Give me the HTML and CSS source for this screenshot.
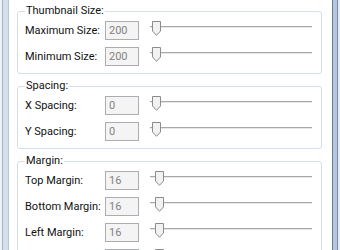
FILE: index.html
```html
<!DOCTYPE html>
<html lang="en">
<head>
    <meta charset="UTF-8">
    <title>Thumbnail Options</title>
    <link rel="stylesheet" href="styles.css">
</head>
<body>
    <div class="window">
        <div class="frame-left"></div>
        <div class="content">
            <fieldset class="group">
                <legend>Thumbnail Size:</legend>
                <div class="row">
                    <label>Maximum Size:</label>
                    <input class="num" value="200" readonly>
                    <div class="slider">
                        <span class="track"></span>
                        <svg class="thumb" style="left: 2px" width="9" height="15" viewBox="0 0 9 15"><path d="M0.5 0.5H8.5V10L4.5 14.3L0.5 10Z"/></svg>
                    </div>
                </div>
                <div class="row">
                    <label>Minimum Size:</label>
                    <input class="num" value="200" readonly>
                    <div class="slider">
                        <span class="track"></span>
                        <svg class="thumb" style="left: 2px" width="9" height="15" viewBox="0 0 9 15"><path d="M0.5 0.5H8.5V10L4.5 14.3L0.5 10Z"/></svg>
                    </div>
                </div>
            </fieldset>

            <fieldset class="group">
                <legend>Spacing:</legend>
                <div class="row">
                    <label>X Spacing:</label>
                    <input class="num" value="0" readonly>
                    <div class="slider">
                        <span class="track"></span>
                        <svg class="thumb" style="left: 2px" width="9" height="15" viewBox="0 0 9 15"><path d="M0.5 0.5H8.5V10L4.5 14.3L0.5 10Z"/></svg>
                    </div>
                </div>
                <div class="row">
                    <label>Y Spacing:</label>
                    <input class="num" value="0" readonly>
                    <div class="slider">
                        <span class="track"></span>
                        <svg class="thumb" style="left: 2px" width="9" height="15" viewBox="0 0 9 15"><path d="M0.5 0.5H8.5V10L4.5 14.3L0.5 10Z"/></svg>
                    </div>
                </div>
            </fieldset>

            <fieldset class="group">
                <legend>Margin:</legend>
                <div class="row">
                    <label>Top Margin:</label>
                    <input class="num" value="16" readonly>
                    <div class="slider">
                        <span class="track"></span>
                        <svg class="thumb" style="left: 5px" width="9" height="15" viewBox="0 0 9 15"><path d="M0.5 0.5H8.5V10L4.5 14.3L0.5 10Z"/></svg>
                    </div>
                </div>
                <div class="row">
                    <label>Bottom Margin:</label>
                    <input class="num" value="16" readonly>
                    <div class="slider">
                        <span class="track"></span>
                        <svg class="thumb" style="left: 5px" width="9" height="15" viewBox="0 0 9 15"><path d="M0.5 0.5H8.5V10L4.5 14.3L0.5 10Z"/></svg>
                    </div>
                </div>
                <div class="row">
                    <label>Left Margin:</label>
                    <input class="num" value="16" readonly>
                    <div class="slider">
                        <span class="track"></span>
                        <svg class="thumb" style="left: 5px" width="9" height="15" viewBox="0 0 9 15"><path d="M0.5 0.5H8.5V10L4.5 14.3L0.5 10Z"/></svg>
                    </div>
                </div>
                <div class="row">
                    <label>Right Margin:</label>
                    <input class="num" value="16" readonly>
                    <div class="slider">
                        <span class="track"></span>
                        <svg class="thumb" style="left: 5px" width="9" height="15" viewBox="0 0 9 15"><path d="M0.5 0.5H8.5V10L4.5 14.3L0.5 10Z"/></svg>
                    </div>
                </div>
            </fieldset>
        </div>
        <div class="frame-right"></div>
    </div>
</body>
</html>
```

FILE: styles.css
```css
* {
    margin: 0;
    padding: 0;
    box-sizing: border-box;
}

html, body {
    width: 340px;
    height: 250px;
    overflow: hidden;
    background-color: #fff;
}

body {
    font-family: Roboto, "Noto Sans", sans-serif;
    font-size: 11px;
    color: #111;
}

.window {
    display: flex;
    height: 250px;
}

/* window chrome on both sides */
.frame-left {
    width: 9px;
    flex: none;
    background: linear-gradient(to right,
        #eef2f6 0, #eef2f6 2px,
        #a3b3c4 2px, #a3b3c4 3px,
        #d5dfea 3px, #d5dfea 8px,
        #b9c5d1 8px);
}

.frame-right {
    width: 8px;
    flex: none;
    background: linear-gradient(to right,
        #6e7c8b 0, #6e7c8b 1px,
        #b3c8e0 1px, #b3c8e0 5px,
        #7b8b9c 5px, #7b8b9c 6px,
        #e4eaf0 6px);
}

.content {
    flex: 1;
    padding: 5px 10px 0 8px;
}

.group {
    border: 1px solid #d5dfe5;
    border-radius: 3px;
    padding: 0 9px 4px 7px;
    margin-bottom: 6px;
}

.group legend {
    padding: 0 1px;
    line-height: 12px;
}

.row {
    display: flex;
    align-items: center;
    height: 26px;
}

.row label {
    width: 80px;
    flex: none;
    white-space: nowrap;
}

.num {
    width: 34px;
    height: 19px;
    flex: none;
    border: 1px solid #abadb3;
    background-color: #f4f4f4;
    color: #838383;
    font: inherit;
    padding: 0 3px;
    outline: none;
}

.slider {
    flex: 1;
    position: relative;
    height: 100%;
    margin-left: 11px;
}

.track {
    position: absolute;
    left: 0;
    right: 0;
    top: 9px;
    height: 2px;
    border-top: 1px solid #a9a9a9;
    background-color: #e7e7e7;
}

.thumb {
    position: absolute;
    top: 4px;
    display: block;
}

.thumb path {
    fill: #f2f2f2;
    stroke: #8c8c8c;
    stroke-width: 1;
}
```
